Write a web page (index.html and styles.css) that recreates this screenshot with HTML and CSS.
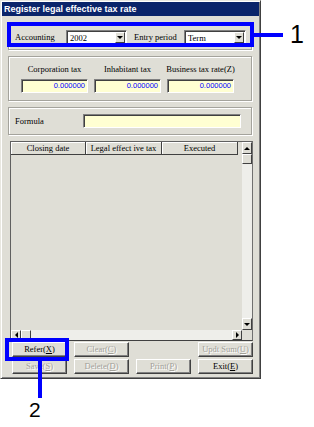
FILE: index.html
```html
<!DOCTYPE html>
<html lang="en">
<head>
    <meta charset="UTF-8">
    <title>Register legal effective tax rate</title>
    <link rel="stylesheet" href="styles.css">
</head>
<body>
    <div class="window">
        <div class="titlebar">Register legal effective tax rate</div>
        <div class="win-body">
            <div class="panel panel-head">
                <span class="lbl lbl-acc">Accounting</span>
                <div class="combo combo-year"><span>2002</span><i class="drop"></i></div>
                <span class="lbl lbl-period">Entry period</span>
                <div class="combo combo-term"><span>Term</span><i class="drop"></i></div>
            </div>

            <div class="panel panel-rates">
                <div class="rate">
                    <span class="lbl">Corporation tax</span>
                    <div class="num">0.000000</div>
                </div>
                <div class="rate">
                    <span class="lbl">Inhabitant tax</span>
                    <div class="num">0.000000</div>
                </div>
                <div class="rate">
                    <span class="lbl">Business tax rate(Z)</span>
                    <div class="num">0.000000</div>
                </div>
            </div>

            <div class="panel panel-formula">
                <span class="lbl lbl-formula">Formula</span>
                <div class="field"></div>
            </div>

            <div class="grid">
                <div class="grid-main">
                    <div class="grid-view">
                        <div class="grid-head">
                            <div class="hcell hc-1">Closing date</div>
                            <div class="hcell hc-2">Legal effect ive tax</div>
                            <div class="hcell hc-3">Executed</div>
                        </div>
                    </div>
                    <div class="vscroll">
                        <div class="sbtn"><i class="arr arr-up"></i></div>
                        <div class="sthumb"></div>
                        <div class="strack"></div>
                        <div class="sbtn"><i class="arr arr-down"></i></div>
                    </div>
                </div>
                <div class="hscroll-row">
                    <div class="hscroll">
                        <div class="sbtn"><i class="arr arr-left"></i></div>
                        <div class="sthumb"></div>
                        <div class="strack"></div>
                        <div class="sbtn"><i class="arr arr-right"></i></div>
                    </div>
                    <div class="corner"></div>
                </div>
            </div>

            <div class="buttons">
                <div class="btn">Refer(<u>X</u>)</div>
                <div class="btn off">Clear(<u>C</u>)</div>
                <div class="btn off btn-updt">Updt Sum(<u>U</u>)</div>
                <div class="btn off">Save(<u>S</u>)</div>
                <div class="btn off">Delete(<u>D</u>)</div>
                <div class="btn off">Print(<u>P</u>)</div>
                <div class="btn">Exit(<u>E</u>)</div>
            </div>
        </div>
    </div>

    <!-- callouts -->
    <div class="mark mark-box-1"></div>
    <div class="mark mark-line-1"></div>
    <div class="mark-num num-1">1</div>

    <div class="mark mark-box-2"></div>
    <div class="mark mark-line-2"></div>
    <div class="mark-num num-2">2</div>
</body>
</html>
```

FILE: styles.css
```css
body {
    margin: 0;
    background: #fff;
    font-family: "Liberation Serif", serif;
    font-size: 8.5px;
    color: #000;
}

.window {
    position: relative;
    width: 261px;
    height: 379px;
    box-sizing: border-box;
    background: #dfded6;
    border: 1px solid;
    border-color: #e8e7e0 #404040 #404040 #e8e7e0;
    box-shadow: inset 1px 1px #fff, inset -1px -1px #808080;
    padding: 1px;
}

.titlebar {
    height: 14px;
    background: #0a246a;
    color: #fff;
    font-family: "Liberation Sans", sans-serif;
    font-weight: 700;
    font-size: 9px;
    line-height: 14px;
    padding-left: 2px;
    white-space: nowrap;
}

.win-body {
    display: flex;
    flex-direction: column;
    padding: 8px 0 0 6px;
}

.lbl {
    white-space: nowrap;
    line-height: 10px;
}

/* etched group boxes */
.panel {
    width: 244px;
    box-sizing: border-box;
    border: 1px solid #a4a39c;
    box-shadow: inset 1px 1px #fff, 1px 1px #fff;
    display: flex;
}

.panel-head {
    height: 26px;
    align-items: center;
    padding-left: 6px;
}
.lbl-acc { width: 51px; }
.lbl-period { width: 50px; margin-left: 7px; }

.combo {
    height: 15px;
    box-sizing: border-box;
    background: #fff;
    border: 1px solid;
    border-color: #808080 #fff #fff #808080;
    box-shadow: inset 1px 1px #404040;
    display: flex;
    align-items: center;
    padding: 1px 1px 0 3px;
}
.combo span { flex: 1; line-height: 12px; }
.combo-year { width: 61px; }
.combo-term { width: 62px; }

.drop {
    width: 10px;
    height: 11px;
    box-sizing: border-box;
    background: #dfded6;
    border: 1px solid;
    border-color: #fff #404040 #404040 #fff;
    display: flex;
    align-items: center;
    justify-content: center;
}
.drop::after {
    content: "";
    border-left: 3px solid transparent;
    border-right: 3px solid transparent;
    border-top: 3px solid #000;
}

.panel-rates {
    margin-top: 6px;
    height: 45px;
    padding: 7px 0 0 12px;
    gap: 6px;
}
.rate {
    width: 67px;
    display: flex;
    flex-direction: column;
    align-items: center;
}
.num, .field {
    height: 14px;
    box-sizing: border-box;
    background: #ffffd2;
    border: 1px solid;
    border-color: #808080 #fff #fff #808080;
    box-shadow: inset 1px 1px #404040;
}
.num {
    width: 67px;
    margin-top: 5px;
    text-align: right;
    padding-right: 2px;
    color: #0000ff;
    font-family: "Liberation Sans", sans-serif;
    font-size: 7.5px;
    line-height: 12px;
}

.panel-formula {
    margin-top: 6px;
    height: 28px;
    align-items: center;
    padding-left: 6px;
}
.lbl-formula { width: 68px; }
.field { width: 158px; }

/* list */
.grid {
    margin: 6px 0 0 2px;
    width: 243px;
    height: 200px;
    box-sizing: border-box;
    border: 1px solid;
    border-color: #606060 #707070 #404040 #606060;
    display: flex;
    flex-direction: column;
}
.grid-main {
    flex: 1;
    display: flex;
}
.grid-view { flex: 1; }
.grid-head { display: flex; height: 13px; }
.hcell {
    box-sizing: border-box;
    height: 13px;
    line-height: 12px;
    text-align: center;
    border-right: 1px solid #404040;
    border-bottom: 1px solid #404040;
    box-shadow: inset 1px 1px #fff;
    white-space: nowrap;
}
.hc-1 { width: 75px; }
.hc-2 { width: 76px; }
.hc-3 { width: 76px; }

.vscroll {
    width: 10px;
    display: flex;
    flex-direction: column;
}
.hscroll-row { display: flex; height: 10px; }
.hscroll { flex: 1; display: flex; }
.corner { width: 10px; }

.sbtn, .sthumb {
    width: 10px;
    height: 10px;
    box-sizing: border-box;
    background: #dfded6;
    border: 1px solid;
    border-color: #fff #404040 #404040 #fff;
    display: flex;
    align-items: center;
    justify-content: center;
}
.vscroll .sbtn { height: 12px; }
.strack { flex: 1; background: #eeeeea; }

.arr { width: 0; height: 0; }
.arr-up { border: 3px solid transparent; border-top: 0; border-bottom: 3px solid #000; }
.arr-down { border: 3px solid transparent; border-bottom: 0; border-top: 3px solid #000; }
.arr-left { border: 3px solid transparent; border-left: 0; border-right: 3px solid #000; }
.arr-right { border: 3px solid transparent; border-right: 0; border-left: 3px solid #000; }

/* command buttons */
.buttons {
    margin: 1px 0 0 4px;
    display: grid;
    grid-template-columns: repeat(4, 55px);
    grid-auto-rows: 15px;
    column-gap: 7px;
    row-gap: 2px;
}
.btn {
    box-sizing: border-box;
    border: 1px solid;
    border-color: #fff #404040 #404040 #fff;
    box-shadow: inset -1px -1px #808080;
    text-align: center;
    line-height: 13px;
    white-space: nowrap;
}
.btn.off {
    color: #a2a19a;
    text-shadow: 1px 1px #fff;
}
.btn-updt { grid-column: 4; }

/* blue callouts */
.mark {
    position: absolute;
    box-sizing: border-box;
    background: transparent;
}
.mark-box-1 {
    left: 7px;
    top: 22px;
    width: 247px;
    height: 25px;
    border: 4px solid #0000ff;
}
.mark-line-1 {
    left: 254px;
    top: 33px;
    width: 29px;
    height: 4px;
    background: #0000ff;
}
.mark-box-2 {
    left: 5px;
    top: 338px;
    width: 64px;
    height: 23px;
    border: 4px solid #0000ff;
}
.mark-line-2 {
    left: 38px;
    top: 361px;
    width: 4px;
    height: 37px;
    background: #0000ff;
}
.mark-num {
    position: absolute;
    font-family: "Liberation Sans", sans-serif;
    color: #000;
}
.num-1 {
    left: 290px;
    top: 22px;
    font-size: 25px;
    line-height: 25px;
}
.num-2 {
    left: 29px;
    top: 399px;
    font-size: 21px;
    line-height: 21px;
}
```
